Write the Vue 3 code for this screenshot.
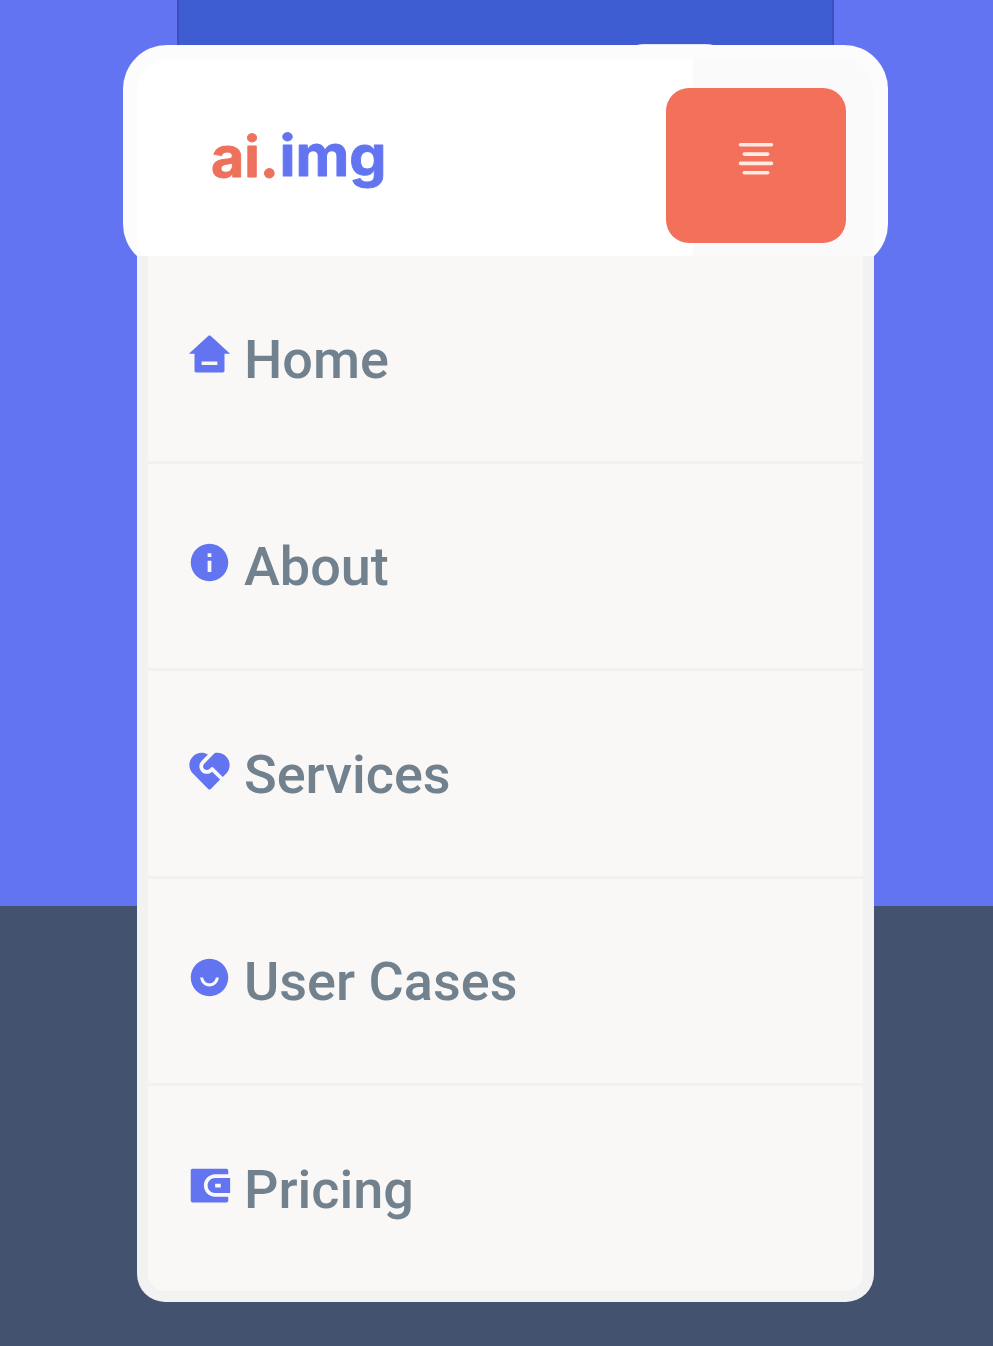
<script setup>
const items = [
  { label: 'Home', icon: 'home' },
  { label: 'About', icon: 'about' },
  { label: 'Services', icon: 'services' },
  { label: 'User Cases', icon: 'cases' },
  { label: 'Pricing', icon: 'pricing' },
]
const paths = {
  home: 'M20 20.3C20 20.7 19.6 21.1 19 21.1H5C4.4 21.1 4 20.7 4 20.3V11H1L11.3 1.6C11.7 1.3 12.3 1.3 12.7 1.6L23 11H20V20.3ZM7.8 15.2V17H16.2V15.2H7.8Z',
  about: 'M12 22C6.48 22 2 17.52 2 12S6.48 2 12 2 22 6.48 22 12 17.52 22 12 22ZM11 11V17H13V11H11ZM11 7V9H13V7H11Z',
  services: 'M14.12 10.48C13.73 10.09 13.1 10.09 12.71 10.48L12 11.19C11.22 11.97 9.95 11.97 9.17 11.19C8.39 10.41 8.39 9.14 9.17 8.36L14.8 2.73C16.91 2.25 19.2 2.83 20.84 4.47C23.26 6.89 23.37 10.74 21.18 13.29L19.07 15.43L14.12 10.48ZM3.16 4.47C5.33 2.3 8.66 1.98 11.17 3.53L7.76 6.94C6.2 8.51 6.2 11.04 7.76 12.6C9.27 14.12 11.7 14.16 13.27 12.74L13.41 12.6L17.66 16.84L12.7 21.8C12.3 22.2 11.7 22.2 11.3 21.8L3.16 13.66C.62 11.12.62 7.01 3.16 4.47Z',
  cases: 'M12 22C6.48 22 2 17.52 2 12S6.48 2 12 2 22 6.48 22 12 17.52 22 12 22ZM7 12C7.4 14.9 9.4 16.8 12 16.8S16.6 14.9 17 12H15.4C15 13.9 13.7 15.1 12 15.1S9 13.9 8.6 12H7Z',
  pricing: 'M22 6H15C11.69 6 9 8.69 9 12S11.69 18 15 18H22V20C22 20.6 21.6 21 21 21H3C2.4 21 2 20.6 2 20V4C2 3.4 2.4 3 3 3H21C21.6 3 22 3.4 22 4V6ZM15 8H23V16H15C12.79 16 11 14.21 11 12S12.79 8 15 8ZM15 11V13H18V11H15Z',
}
</script>

<template>
  <main class="page">
    <div class="backdrop"><i class="tab"></i></div>
    <header class="bar">
      <div class="surface">
        <svg class="logo" width="190" height="80" viewBox="0 0 190 80">
          <text class="ai" x="5" y="57" textLength="68" lengthAdjust="spacingAndGlyphs">ai.</text>
          <text class="img" x="73.5" y="55.5" textLength="107" lengthAdjust="spacingAndGlyphs">img</text>
        </svg>
        <button class="toggle" aria-label="Menu">
          <svg width="36" height="34" viewBox="0 0 36 34">
            <path d="M2.5 2.7H33.5M6.3 12.1H29.7M2.5 21.4H33.5M6.3 30.8H29.7" />
          </svg>
        </button>
      </div>
    </header>
    <nav class="menu">
      <a v-for="item in items" :key="item.icon" class="item">
        <svg class="icon" width="45" height="45" viewBox="0 0 24 24"><path fill-rule="evenodd" :d="paths[item.icon]" /></svg>
        <svg class="label" width="300" height="70" viewBox="0 0 300 70">
          <text x="0" y="52">{{ item.label }}</text>
        </svg>
      </a>
    </nav>
  </main>
</template>

<style>
body { background: #42526e; }
</style>

<style scoped>
.page {
  position: relative;
  box-sizing: border-box;
  width: 993px;
  height: 1346px;
  padding: 45px 105px 0 123px;
  overflow: hidden;
  background: linear-gradient(#6374f2 906px, #43526e 906px);
}
.backdrop {
  position: absolute;
  left: 177px;
  top: 0;
  width: 657px;
  height: 60px;
  box-sizing: border-box;
  background: #3f5dd2;
  border: solid #3b50bd;
  border-width: 0 2px;
}
.tab {
  position: absolute;
  left: 455px;
  top: 43.5px;
  width: 82px;
  height: 10px;
  border-radius: 10px 10px 0 0 / 3px 3px 0 0;
  background: #dfe6fa;
}
.bar {
  position: relative;
  box-sizing: border-box;
  width: 765px;
  height: 223px;
  padding: 14px 14px 12px;
  border-radius: 44px;
  background: #fcfcfc;
}
.surface {
  display: flex;
  justify-content: space-between;
  align-items: flex-start;
  height: 197px;
  border-radius: 32px 32px 12px 12px;
  background: linear-gradient(90deg, #fff 556px, #fafafa 556px);
}
.logo { margin: 61px 0 0 69px; overflow: visible; }
.logo text {
  font: 700 56px Inter, sans-serif;
  stroke-width: 0.9px;
  stroke-linejoin: round;
}
.ai { fill: #ee715c; stroke: #ee715c; }
.img { fill: #6374f0; stroke: #6374f0; }
.toggle {
  display: flex;
  align-items: flex-start;
  justify-content: center;
  width: 180px;
  height: 155px;
  margin: 29px 28px 0 0;
  padding: 54px 0 0;
  border: 0;
  border-radius: 23px;
  background: #f3705a;
}
.toggle path { fill: none; stroke: #ffeae4; stroke-width: 3.6; stroke-linecap: round; }
.menu {
  position: relative;
  box-sizing: border-box;
  width: 737px;
  height: 1046px;
  margin: -12px 0 0 14px;
  border: solid #f3f2f3;
  border-width: 0 11px 11px;
  border-radius: 0 0 28px 28px;
  background: #f9f8f7;
}
.item {
  display: flex;
  align-items: flex-start;
  box-sizing: border-box;
  height: 207.5px;
  padding: 76.5px 0 0 39.4px;
  border-bottom: 3px solid #f2f1f0;
}
.item:last-child { border-bottom: 0; }
.icon { flex: none; fill: #6374f0; }
.label { margin: -7px 0 0 11.5px; overflow: visible; }
.label text { font: 500 54px Roboto, sans-serif; fill: #71818e; }
</style>
